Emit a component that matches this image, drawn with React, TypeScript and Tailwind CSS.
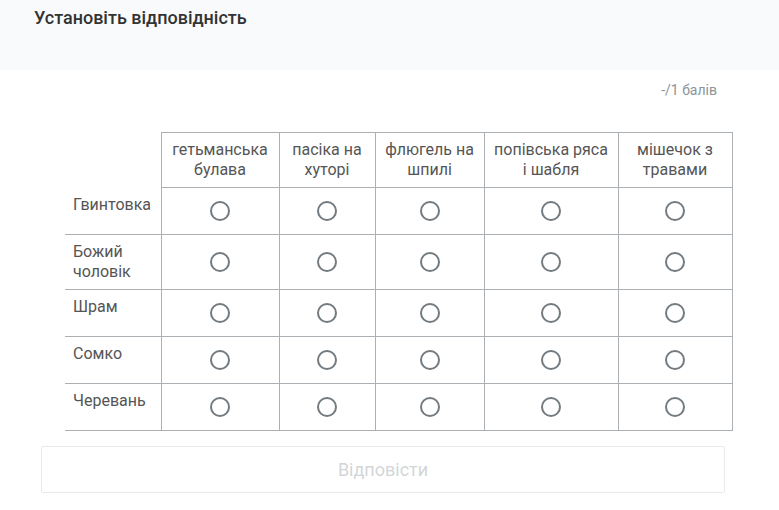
import React from 'react';

const columns = [
  { label: ['гетьманська', 'булава'], w: 'w-[118px]' },
  { label: ['пасіка на', 'хуторі'], w: 'w-[96px]' },
  { label: ['флюгель на', 'шпилі'], w: 'w-[109px]' },
  { label: ['попівська ряса', 'і шабля'], w: 'w-[134px]' },
  { label: ['мішечок з', 'травами'], w: 'w-[114px]' },
];

const rows = [
  { label: ['Гвинтовка'], h: 'h-[47px]' },
  { label: ['Божий', 'чоловік'], h: 'h-[55px]' },
  { label: ['Шрам'], h: 'h-[47px]' },
  { label: ['Сомко'], h: 'h-[47px]' },
  { label: ['Черевань'], h: 'h-[47px]' },
];

function Radio() {
  return <span className="block w-[20px] h-[20px] rounded-full border-2 border-[#737b80] mx-auto" />;
}

export default function App() {
  return (
    <div className="w-[779px] h-[510px] bg-white text-[#4a4a4a]" style={{ fontFamily: 'Roboto, "Noto Sans", sans-serif' }}>
      <div className="h-[70px] bg-[#f8fafc] px-[34px] pt-[6px]">
        <h1 className="text-[18px] leading-[24px] font-medium text-[#333]">Установіть відповідність</h1>
      </div>

      <div className="flex justify-end pr-[62px] pt-[11px]">
        <span className="text-[14px] leading-[18px] text-[#8c9399]">-/1 балів</span>
      </div>

      <div className="pl-[65px] pt-[33px]">
        <table className="border-collapse text-[16px] leading-[20px]">
          <thead>
            <tr className="h-[55px]">
              <th className="w-[96px] p-0" />
              {columns.map((c, i) => (
                <th key={i} className={`${c.w} border border-[#aab0b4] font-normal text-center align-top pt-[7px] px-1 text-[#555]`}>
                  {c.label[0]}
                  <br />
                  {c.label[1]}
                </th>
              ))}
            </tr>
          </thead>
          <tbody>
            {rows.map((r, i) => (
              <tr key={i} className={r.h}>
                <td className="border-b border-[#aab0b4] align-top pl-[8px] pt-[7px] text-[#555]">
                  {r.label.map((l, j) => (
                    <div key={j}>{l}</div>
                  ))}
                </td>
                {columns.map((_, j) => (
                  <td key={j} className="border border-[#aab0b4] align-middle">
                    <Radio />
                  </td>
                ))}
              </tr>
            ))}
          </tbody>
        </table>
      </div>

      <div className="px-[41px] pr-[55px] pt-[15px]">
        <button className="w-[684px] h-[47px] border border-[#e8eaec] rounded-[2px] text-[18px] text-[#d3d6d9] bg-white">
          Відповісти
        </button>
      </div>
    </div>
  );
}
